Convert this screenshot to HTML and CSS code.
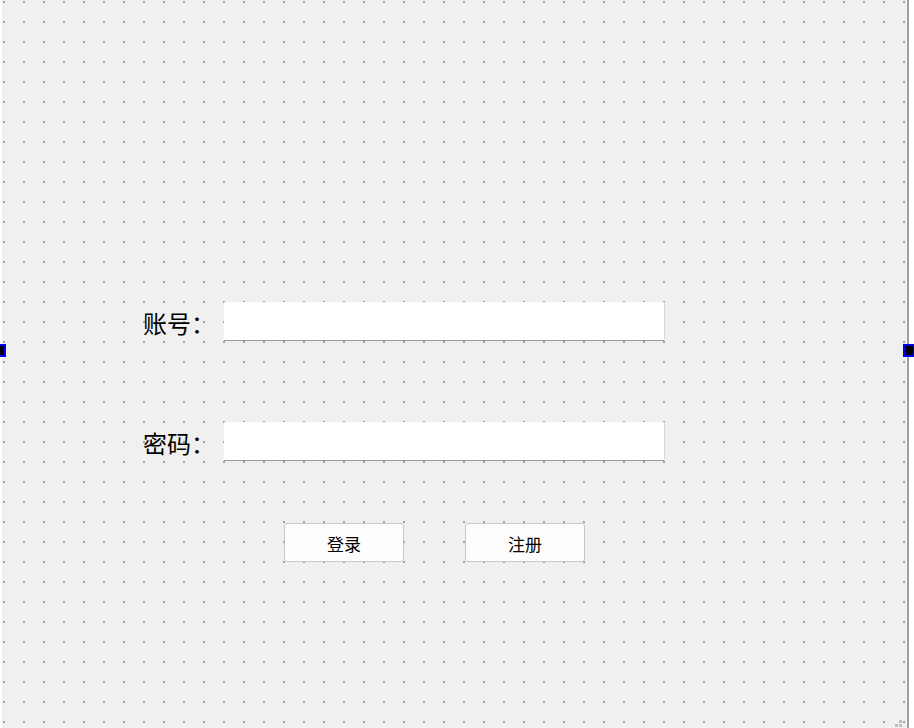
FILE: index.html
```html
<!DOCTYPE html>
<html lang="zh-CN">
<head>
    <meta charset="UTF-8">
    <title>登录</title>
    <link rel="stylesheet" href="styles.css">
</head>
<body>
    <div class="form">
        <svg class="grid" width="905" height="728">
            <defs>
                <pattern id="dots" x="1" y="1" width="20" height="20" patternUnits="userSpaceOnUse">
                    <rect x="0" y="0" width="2" height="2" fill="#a0a0a0"/>
                </pattern>
            </defs>
            <rect width="905" height="728" fill="url(#dots)"/>
        </svg>

        <div class="fields">
            <label class="label">账号：</label>
            <input class="field" type="text">
            <label class="label">密码：</label>
            <input class="field" type="password">
        </div>

        <div class="actions">
            <button class="btn">登录</button>
            <button class="btn">注册</button>
        </div>

        <svg class="grip" width="10" height="8">
            <rect x="5" y="0" width="3" height="3" fill="#bdbdbd"/>
            <rect x="1" y="4" width="3" height="3" fill="#bdbdbd"/>
            <rect x="5" y="4" width="3" height="3" fill="#bdbdbd"/>
        </svg>
    </div>

    <span class="handle handle-left"></span>
    <span class="handle handle-right"></span>
</body>
</html>
```

FILE: styles.css
```css
html, body {
    margin: 0;
    padding: 0;
    background: #fff;
    overflow: hidden;
}
body {
    position: relative;
    width: 914px;
    height: 728px;
    font-family: "Noto Sans CJK SC", "Noto Sans", sans-serif;
    color: #000;
}
.form {
    position: relative;
    box-sizing: border-box;
    margin-left: 2px;
    width: 907px;
    height: 728px;
    background: #f0f0f0;
    border-right: 2px solid #a0a0a0;
    padding: 302px 0 0 141px;
}
.grid {
    position: absolute;
    left: 0;
    top: 0;
}
.fields {
    position: relative;
    display: grid;
    grid-template-columns: 81px 440px;
    grid-auto-rows: 39px;
    row-gap: 81px;
    align-items: center;
}
.label {
    position: relative;
    top: 1px;
    font-size: 24px;
    line-height: 39px;
    white-space: nowrap;
}
.field {
    box-sizing: border-box;
    width: 440px;
    height: 39px;
    margin: 0;
    border: none;
    border-bottom: 1px solid #9a9a9a;
    box-shadow: 1px 0 0 #d8d8d8;
    background: #fff;
    outline: none;
}
.actions {
    position: relative;
    display: flex;
    gap: 61px;
    margin-top: 62px;
    padding-left: 141px;
}
.btn {
    box-sizing: border-box;
    width: 120px;
    height: 39px;
    background: #fdfdfd;
    border: 1px solid #c8c8c8;
    border-radius: 3px;
    font-family: "Noto Sans CJK SC", sans-serif;
    font-size: 17px;
    padding: 1px 0 0;
    color: #000;
}
.grip {
    position: absolute;
    right: 3px;
    bottom: 0;
}
.handle {
    position: absolute;
    top: 344px;
    box-sizing: border-box;
    width: 12px;
    height: 13px;
    background: #000;
    border: 2px solid #0000ff;
}
.handle-left {
    left: -6px;
}
.handle-right {
    left: 903px;
}
```
